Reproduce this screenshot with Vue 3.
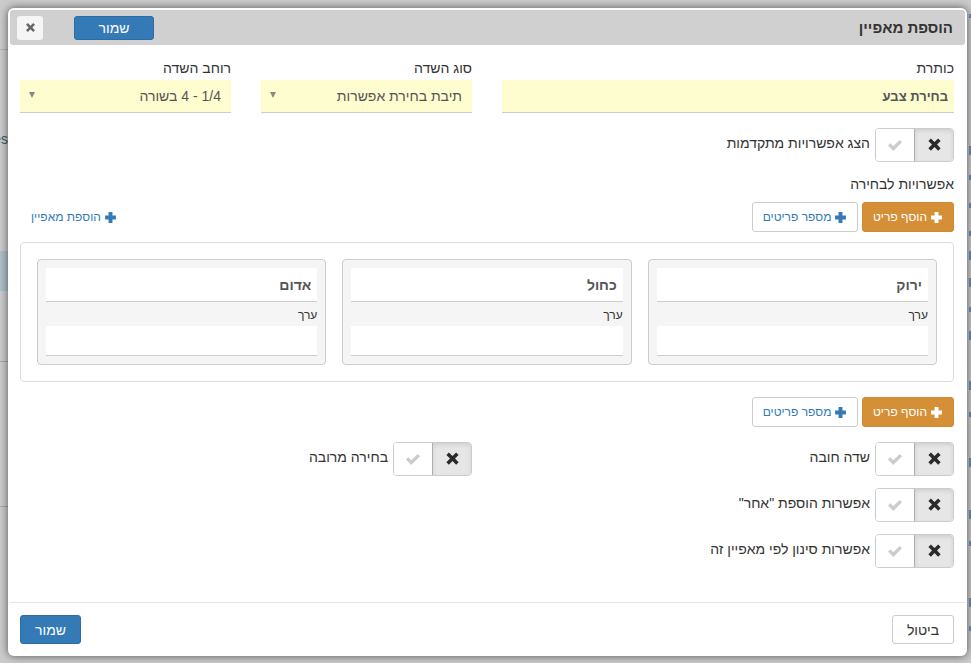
<script setup>
const options = ['ירוק', 'כחול', 'אדום']

const pairToggles = ['שדה חובה', 'בחירה מרובה']
const stackedToggles = ['אפשרות הוספת "אחר"', 'אפשרות סינון לפי מאפיין זה']

const xPath = 'M1.1 3.1 3.1 1.1 6 4 8.9 1.1 10.900 3.100 8 6 10.900 8.900 8.900 10.900 6 8 3.100 10.900 1.100 8.900 4 6Z'
const okPath = 'M1 8.600 3.300 6.300 6.300 9.300 12.700 3 15 5.300 6.300 14Z'
const plusPath = 'M4.200 1h3.600v3.200H11v3.600H7.800V11H4.200V7.800H1V4.200h3.200Z'

// bits of the page behind the dialog that stick out on the right side
const rightBits = [
  { top: 14, h: 4 }, { top: 146, h: 9 }, { top: 175, h: 5 }, { top: 203, h: 5 }, { top: 231, h: 5 },
  { top: 251, h: 9 }, { top: 278, h: 9 }, { top: 307, h: 5 }, { top: 331, h: 9 }, { top: 381, h: 9 },
  { top: 412, h: 5 }, { top: 458, h: 9 }, { top: 510, h: 9 }, { top: 541, h: 5 }, { top: 598, h: 9 }, { top: 626, h: 5 }
]
</script>

<template>
  <div class="page">
    <div class="backdrop">
      <div class="back-left">
        <div class="back-row r1"></div>
        <div class="back-row r2">es</div>
        <div class="back-row r3"></div>
        <div class="back-row r4"></div>
        <div class="back-row r5"></div>
      </div>
      <span
        v-for="b in rightBits"
        :key="b.top"
        class="right-bit"
        :style="{ top: b.top + 'px', height: b.h + 'px' }"
      ></span>
    </div>

    <div class="dialog" dir="rtl">
      <div class="dialog-header">
        <h4 class="dialog-title">הוספת מאפיין</h4>
        <div class="header-actions">
          <button class="btn btn-primary btn-save-top">שמור</button>
          <button class="btn-close">
            <svg width="11" height="11" viewBox="0 0 12 12"><path :d="xPath" fill="#666" /></svg>
          </button>
        </div>
      </div>

      <div class="dialog-body">
        <div class="fields">
          <div class="field">
            <label>כותרת</label>
            <input class="input input-title" value="בחירת צבע" />
          </div>
          <div class="field">
            <label>סוג השדה</label>
            <div class="select"><span>תיבת בחירת אפשרות</span><i class="caret"></i></div>
          </div>
          <div class="field">
            <label>רוחב השדה</label>
            <div class="select"><span>1/4 - 4 בשורה</span><i class="caret"></i></div>
          </div>
        </div>

        <div class="toggle-row first">
          <div class="toggle">
            <span class="t-off"><svg width="15" height="15" viewBox="0 0 12 12"><path :d="xPath" fill="#2a2a2a" /></svg></span>
            <span class="t-on"><svg width="16" height="16" viewBox="0 0 16 16"><path :d="okPath" fill="#ccc" /></svg></span>
          </div>
          <span class="toggle-label">הצג אפשרויות מתקדמות</span>
        </div>

        <div class="section-title">אפשרויות לבחירה</div>

        <div class="btn-row">
          <button class="btn btn-orange"><svg class="plus" viewBox="0 0 12 12"><path :d="plusPath" fill="#fff" /></svg>הוסף פריט</button>
          <button class="btn btn-outline"><svg class="plus" viewBox="0 0 12 12"><path :d="plusPath" fill="#337ab7" /></svg>מספר פריטים</button>
          <a class="add-link"><svg class="plus" viewBox="0 0 12 12"><path :d="plusPath" fill="#337ab7" /></svg>הוספת מאפיין</a>
        </div>

        <div class="options-panel">
          <div v-for="opt in options" :key="opt" class="option-card">
            <input class="input-white input-bold" :value="opt" />
            <div class="option-label">ערך</div>
            <input class="input-white short" />
          </div>
        </div>

        <div class="btn-row second">
          <button class="btn btn-orange"><svg class="plus" viewBox="0 0 12 12"><path :d="plusPath" fill="#fff" /></svg>הוסף פריט</button>
          <button class="btn btn-outline"><svg class="plus" viewBox="0 0 12 12"><path :d="plusPath" fill="#337ab7" /></svg>מספר פריטים</button>
        </div>

        <div class="toggle-grid">
          <div v-for="t in pairToggles" :key="t" class="toggle-row">
            <div class="toggle">
              <span class="t-off"><svg width="15" height="15" viewBox="0 0 12 12"><path :d="xPath" fill="#2a2a2a" /></svg></span>
              <span class="t-on"><svg width="16" height="16" viewBox="0 0 16 16"><path :d="okPath" fill="#ccc" /></svg></span>
            </div>
            <span class="toggle-label">{{ t }}</span>
          </div>
        </div>
        <div v-for="t in stackedToggles" :key="t" class="toggle-row stacked">
          <div class="toggle">
            <span class="t-off"><svg width="15" height="15" viewBox="0 0 12 12"><path :d="xPath" fill="#2a2a2a" /></svg></span>
            <span class="t-on"><svg width="16" height="16" viewBox="0 0 16 16"><path :d="okPath" fill="#ccc" /></svg></span>
          </div>
          <span class="toggle-label">{{ t }}</span>
        </div>
      </div>

      <div class="dialog-footer">
        <button class="btn btn-default">ביטול</button>
        <button class="btn btn-primary btn-save">שמור</button>
      </div>
    </div>
  </div>
</template>

<style scoped>
.page {
  position: relative;
  width: 971px;
  height: 663px;
  overflow: hidden;
  background: #cbcbcb;
  font-family: "Liberation Sans", Arial, sans-serif;
  font-size: 14px;
  color: #333;
  box-sizing: border-box;
  padding: 8px 4px 7px 8px;
}

.backdrop {
  position: absolute;
  inset: 0;
}

.back-left {
  position: absolute;
  left: 0;
  top: 0;
  width: 8px;
  height: 663px;
  font-size: 14px;
  color: #47596a;
  line-height: 16px;
}

.back-row {
  border-bottom: 1px solid #b4b4b4;
  box-sizing: border-box;
  overflow: hidden;
}

.r1 { height: 50px; }
.r2 { height: 201px; padding-top: 81px; direction: rtl; border-bottom: none; }
.r3 { height: 40px; background: #aebfc8; border-bottom: none; }
.r4 { height: 71px; border-bottom: 1px solid #aaa; }
.r5 { height: 145px; border-bottom: 1px solid #aaa; }

.right-bit {
  position: absolute;
  right: 0;
  width: 2px;
  background: #6d8fb0;
}

.dialog {
  position: relative;
  box-sizing: border-box;
  width: 959px;
  height: 648px;
  background: #fff;
  border-radius: 6px;
  padding: 2px;
  display: flex;
  flex-direction: column;
  box-shadow: 0 0 8px rgba(0, 0, 0, 0.6);
}

.dialog-header {
  height: 35px;
  flex: none;
  background: #d0d0d0;
  border-radius: 3px;
  display: flex;
  align-items: center;
  justify-content: space-between;
  padding: 0 12px 0 7px;
  box-sizing: border-box;
}

.dialog-title {
  margin: 0;
  font-size: 15px;
  font-weight: bold;
  color: #333;
}

.header-actions {
  display: flex;
  align-items: center;
  gap: 31px;
}

.btn-close {
  width: 26px;
  height: 24px;
  border: none;
  border-radius: 3px;
  background: #f5f5f5;
  padding: 0;
  display: flex;
  align-items: center;
  justify-content: center;
}

.btn {
  font-family: inherit;
  font-size: 14px;
  border-radius: 3px;
  border: 1px solid #ccc;
  box-sizing: border-box;
  padding: 0;
  display: inline-flex;
  align-items: center;
  justify-content: center;
  gap: 3px;
}

.btn-primary {
  background: #337ab7;
  border-color: #2e6da4;
  color: #fff;
}

.btn-save-top {
  width: 80px;
  height: 24px;
}

.dialog-body {
  flex: 1;
  padding: 13px 11px 0 10px;
}

.fields {
  display: grid;
  grid-template-columns: 452px 211px 211px;
  gap: 30px;
}

.field label {
  display: block;
  line-height: 20px;
  height: 22px;
}

.input,
.select {
  display: flex;
  align-items: center;
  justify-content: space-between;
  box-sizing: border-box;
  width: 100%;
  height: 33px;
  background: #fefdd0;
  border: none;
  border-bottom: 1px solid #ccc;
  padding: 0 10px;
  font-family: inherit;
  font-size: 14px;
  color: #555;
  outline: none;
}

.input-title {
  font-size: 13px;
  font-weight: bold;
  padding: 0 6px;
}

.input-bold {
  font-weight: bold;
}

.caret {
  width: 0;
  height: 0;
  border-left: 3.5px solid transparent;
  border-right: 3.5px solid transparent;
  border-top: 6px solid #888;
  margin-bottom: 3px;
  margin-left: -1px;
}

.toggle-row {
  display: flex;
  align-items: center;
  gap: 5px;
}

.toggle-row.first {
  margin-top: 15px;
}

.toggle-row.stacked {
  margin-top: 12px;
}

.toggle {
  display: flex;
  width: 79px;
  height: 34px;
  flex: none;
  box-sizing: border-box;
  border: 1px solid #ccc;
  border-radius: 4px;
  overflow: hidden;
}

.t-off,
.t-on {
  flex: 1;
  display: flex;
  align-items: center;
  justify-content: center;
}

.t-off {
  background: #e6e6e6;
  box-shadow: inset 0 2px 4px rgba(0, 0, 0, 0.1);
  border-left: 1px solid #adadad;
  padding: 0 0 2px 1px;
}

.t-on {
  background: #fff;
}

.toggle-label {
  line-height: 20px;
  margin-top: -4px;
}

.section-title {
  margin-top: 12px;
  line-height: 20px;
  height: 20px;
}

.btn-row {
  display: flex;
  align-items: center;
  gap: 4px;
  margin-top: 8px;
  height: 30px;
}

.btn-row.second {
  margin-top: 15px;
}

.btn-orange,
.btn-outline {
  font-size: 12px;
  height: 30px;
}

.btn-orange {
  width: 92px;
  background: #d58f37;
  border-color: #d08a33;
  color: #fff;
}

.btn-outline {
  width: 106px;
  background: #fff;
  color: #337ab7;
}

.plus {
  width: 13px;
  height: 13px;
  flex: none;
}

.add-link {
  margin-right: auto;
  margin-left: 11px;
  color: #337ab7;
  font-size: 12px;
  display: flex;
  align-items: center;
  gap: 3px;
}

.options-panel {
  display: grid;
  grid-template-columns: repeat(3, 1fr);
  gap: 16px;
  margin-top: 10px;
  height: 140px;
  box-sizing: border-box;
  padding: 16px;
  border: 1px solid #ddd;
  border-radius: 4px;
}

.option-card {
  background: #f5f5f5;
  border: 1px solid #ccc;
  border-radius: 4px;
  padding: 8px;
  box-sizing: border-box;
  height: 106px;
}

.input-white {
  display: block;
  box-sizing: border-box;
  width: 100%;
  height: 34px;
  border: none;
  border-bottom: 1px solid #ccc;
  background: #fff;
  padding: 0 6px;
  font-family: inherit;
  font-size: 14px;
  color: #555;
  outline: none;
}

.input-white.short {
  height: 30px;
}

.option-label {
  font-size: 12px;
  height: 24px;
  line-height: 26px;
}

.toggle-grid {
  display: grid;
  grid-template-columns: 452px 452px;
  gap: 30px;
  margin-top: 15px;
}

.dialog-footer {
  flex: none;
  height: 52px;
  box-sizing: border-box;
  border-top: 1px solid #e5e5e5;
  display: flex;
  align-items: flex-start;
  justify-content: space-between;
  padding: 12px 11px 0 10px;
}

.btn-default {
  width: 62px;
  height: 29px;
  background: #fff;
  color: #333;
}

.btn-save {
  width: 61px;
  height: 29px;
}
</style>

<style>
html, body {
  margin: 0;
  background: #cbcbcb;
}
</style>
